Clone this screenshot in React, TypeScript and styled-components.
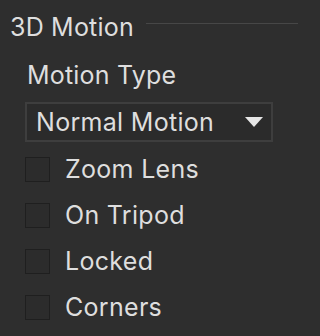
import React from 'react';
import styled, { createGlobalStyle } from 'styled-components';

const GlobalStyle = createGlobalStyle`
  html, body {
    margin: 0;
    padding: 0;
    background: #2e2e2e;
  }
  body {
    font-family: Inter, "Noto Sans", sans-serif;
    color: #dedede;
  }
`;

const Panel = styled.div`
  width: 298px;
  height: 336px;
  overflow: hidden;
  background: #2e2e2e;
  padding-top: 15px;
  box-sizing: border-box;
`;

const SectionHeader = styled.div`
  display: flex;
  align-items: center;
  padding-left: 10px;
  height: 24px;
`;

const SectionTitle = styled.span`
  font-size: 25px;
  line-height: 24px;
  letter-spacing: 0.2px;
  white-space: nowrap;
`;

const Rule = styled.div`
  flex: 1;
  height: 1px;
  background: #474747;
  margin-left: 12px;
  margin-bottom: 8px;
`;

const Body = styled.div`
  padding-left: 25px;
  padding-right: 25px;
  display: flex;
  flex-direction: column;
`;

const FieldLabel = styled.div`
  font-size: 25px;
  line-height: 24px;
  letter-spacing: 0.2px;
  margin-top: 24px;
  padding-left: 2px;
`;

const Select = styled.div`
  margin-top: 15px;
  height: 40px;
  width: 248px;
  box-sizing: border-box;
  border: 2px solid #3e3e3e;
  background: #2b2b2b;
  display: flex;
  align-items: center;
  justify-content: space-between;
  padding: 0 8px 0 9px;
`;

const SelectValue = styled.span`
  font-size: 25px;
  line-height: 24px;
  letter-spacing: 0.3px;
`;

const Caret = styled.svg`
  width: 18px;
  height: 10px;
  display: block;
`;

const CheckList = styled.div`
  display: flex;
  flex-direction: column;
  gap: 21px;
  margin-top: 15px;
`;

const CheckRow = styled.label`
  display: flex;
  align-items: center;
  gap: 15px;
  height: 25px;
`;

const Box = styled.span`
  width: 25px;
  height: 25px;
  box-sizing: border-box;
  border: 1px solid #1f1f1f;
  background: #2c2c2c;
  flex: none;
`;

const CheckText = styled.span`
  font-size: 25px;
  line-height: 24px;
  letter-spacing: 0.3px;
  margin-bottom: 2px;
`;

const options = ['Zoom Lens', 'On Tripod', 'Locked', 'Corners'];

const App: React.FC = () => {
  return (
    <Panel>
      <GlobalStyle />
      <SectionHeader>
        <SectionTitle>3D Motion</SectionTitle>
        <Rule />
      </SectionHeader>
      <Body>
        <FieldLabel>Motion Type</FieldLabel>
        <Select>
          <SelectValue>Normal Motion</SelectValue>
          <Caret viewBox='0 0 18 10'>
            <path d='M0 0 H18 L9 10 Z' fill='#e6e6e6' />
          </Caret>
        </Select>
        <CheckList>
          {options.map((name) => (
            <CheckRow key={name}>
              <Box />
              <CheckText>{name}</CheckText>
            </CheckRow>
          ))}
        </CheckList>
      </Body>
    </Panel>
  );
};

export default App;
